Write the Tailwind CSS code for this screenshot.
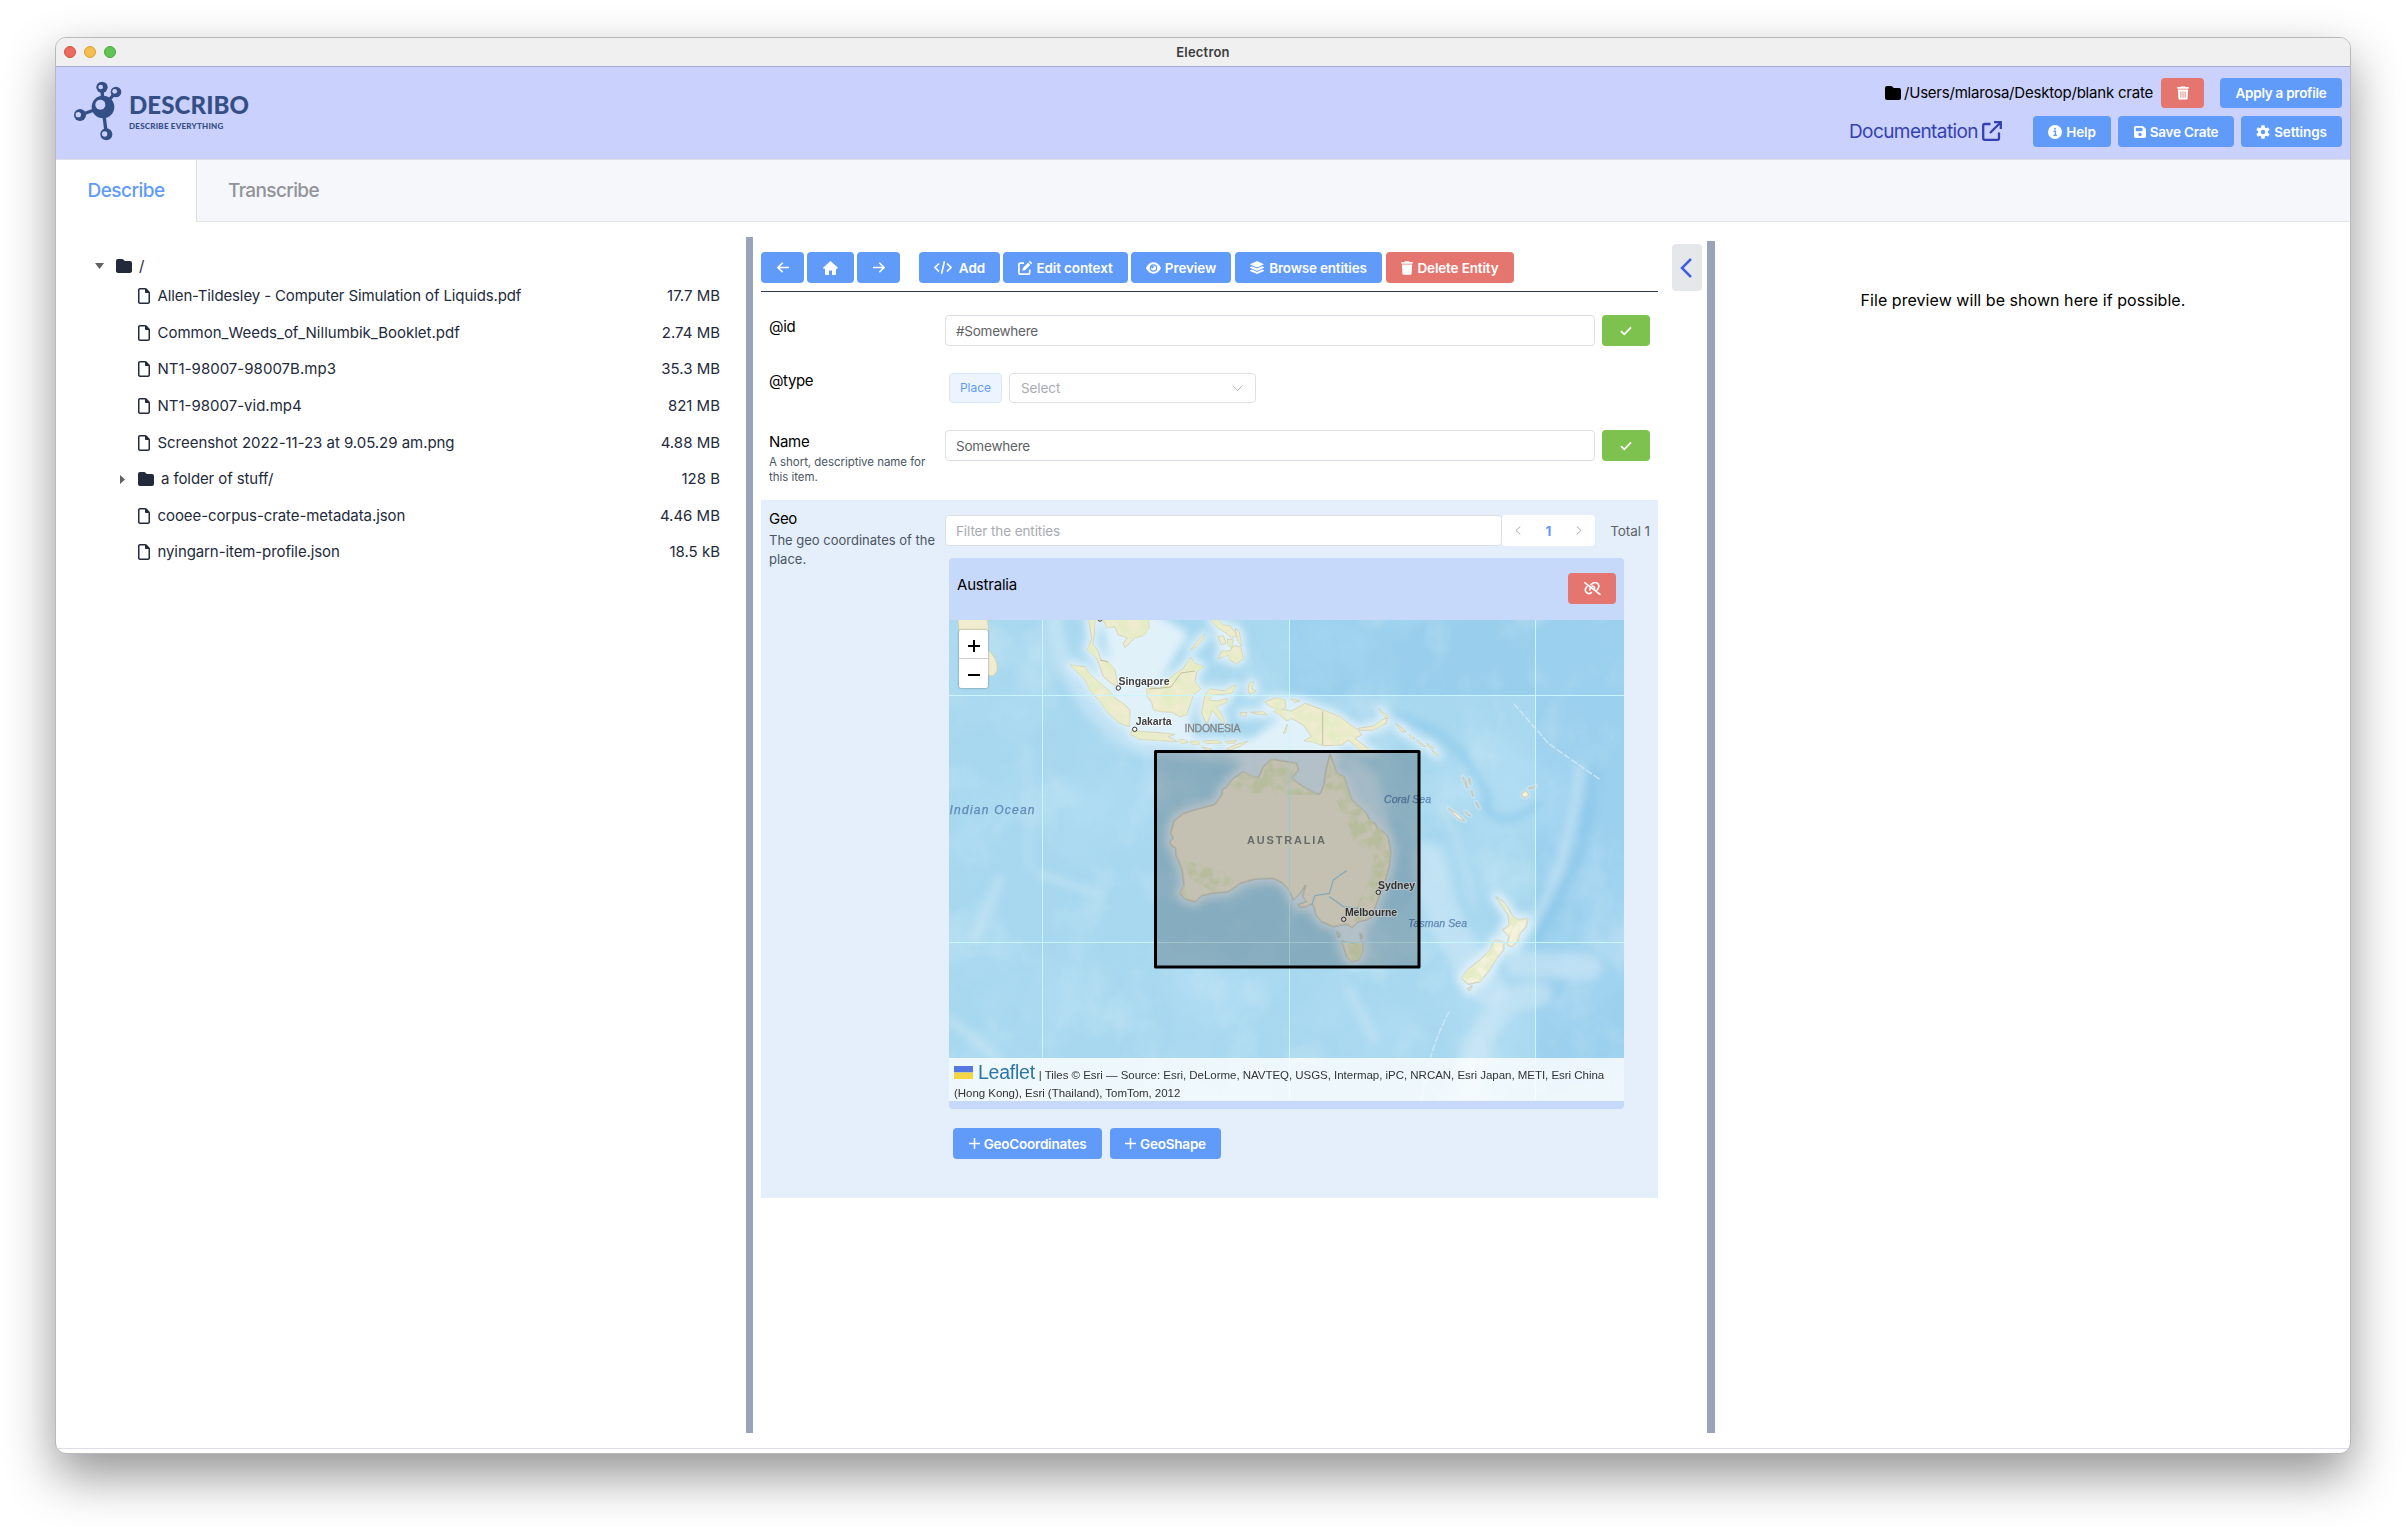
<!DOCTYPE html>
<html lang="en">
<head>
<meta charset="utf-8">
<title>Electron</title>
<script src="https://cdn.jsdelivr.net/npm/@tailwindcss/browser@4"></script>
</head>
<body class="w-[2406px] h-[1527px] overflow-hidden bg-white font-['Inter',sans-serif] text-[15px] leading-5 text-black">
<svg class="hidden">
  <symbol id="folder" viewBox="0 32 512 448"><path fill="currentColor" d="M64 480H448c35.3 0 64-28.700 64-64V160c0-35.300-28.700-64-64-64H288c-10.100 0-19.600-4.700-25.600-12.800L243.200 57.600C231.100 41.500 212.100 32 192 32H64C28.700 32 0 60.700 0 96V416c0 35.300 28.700 64 64 64z"/></symbol>
  <symbol id="file" viewBox="0 0 384 512"><path fill="currentColor" d="M320 464c8.800 0 16-7.200 16-16V160H256c-17.700 0-32-14.300-32-32V48H64c-8.800 0-16 7.200-16 16V448c0 8.800 7.200 16 16 16H320zM0 64C0 28.700 28.700 0 64 0H229.500c17 0 33.300 6.700 45.300 18.700l90.500 90.500c12 12 18.700 28.300 18.700 45.300V448c0 35.300-28.700 64-64 64H64c-35.300 0-64-28.700-64-64V64z"/></symbol>
  <symbol id="trash" viewBox="0 0 448 512"><path fill="currentColor" d="M135.200 17.700L128 32H32C14.300 32 0 46.300 0 64S14.300 96 32 96H416c17.700 0 32-14.300 32-32s-14.300-32-32-32H320l-7.200-14.300C307.400 6.800 296.300 0 284.200 0H163.800c-12.100 0-23.200 6.800-28.600 17.700zM416 128H32L53.200 467c1.600 25.300 22.600 45 47.900 45H346.900c25.300 0 46.300-19.700 47.900-45L416 128z"/></symbol>
  <symbol id="save" viewBox="0 32 448 448"><path fill="currentColor" fill-rule="evenodd" d="M64 32C28.700 32 0 60.700 0 96V416c0 35.300 28.700 64 64 64H384c35.300 0 64-28.700 64-64V173.300c0-17-6.700-33.300-18.700-45.300L352 50.700C340 38.700 323.700 32 306.700 32H64zM64 128c0-17.700 14.300-32 32-32H288c17.700 0 32 14.300 32 32v64c0 17.700-14.300 32-32 32H96c-17.700 0-32-14.300-32-32V128zM224 288a64 64 0 1 1 0 128 64 64 0 1 1 0-128z"/></symbol>
  <symbol id="check" viewBox="0 0 12 10"><path d="M1 5.200 4.300 8.300 11 1.300" fill="none" stroke="currentColor" stroke-width="1.700"/></symbol>
</svg>

<div class="ml-[55px] mt-[37px] w-[2296px] h-[1417px] rounded-[11px] border border-[#b9b9bb] overflow-hidden bg-white flex flex-col shadow-[0_22px_50px_rgba(0,0,0,0.42)]">
  <!-- title bar -->
  <div class="h-[29px] shrink-0 bg-[#f0f0f0] border-b border-[#a5abcf] flex items-center">
    <div class="flex gap-2 pl-[8px] w-[200px]">
      <span class="size-3 rounded-full bg-[#ec6a5e] border border-[#d0503f]"></span>
      <span class="size-3 rounded-full bg-[#f4bf4f] border border-[#d8a03c]"></span>
      <span class="size-3 rounded-full bg-[#61c554] border border-[#4ca73d]"></span>
    </div>
    <div class="flex-1 text-center text-[13px] font-semibold text-[#3c3c3c] pr-[200px] pb-[1px] tracking-[0.2px]">Electron</div>
  </div>
  <!-- header -->
  <div class="h-[93px] shrink-0 bg-[#cad1fc] border-b border-[#dcdfe6] flex justify-between">
    <div class="flex pl-[17px] pt-[14px]">
      <svg class="w-[50px] h-[60px]" viewBox="100 183 150 180">
        <g stroke="#344f86" stroke-width="10"><path d="M190 261 187 202"/><path d="M190 261 229 216"/><path d="M190 261 121 285"/><path d="M190 261 200 343"/></g>
        <g fill="#344f86"><circle cx="190" cy="261" r="34"/><circle cx="187" cy="202" r="17"/><circle cx="229" cy="216" r="16"/><circle cx="121" cy="285" r="18"/><circle cx="200" cy="343" r="18"/></g>
        <g fill="#cad1fc"><circle cx="182" cy="254" r="15"/><circle cx="183" cy="201" r="7"/><circle cx="225" cy="214" r="7"/><circle cx="116" cy="284" r="8"/><circle cx="195" cy="342" r="8"/></g>
      </svg>
      <div class="pl-[6px] pt-[12px] text-[#344f86] font-['Lato',sans-serif]">
        <div class="text-[24px] leading-[24px] font-black tracking-[0.1px]">DESCRIBO</div>
        <div class="text-[8px] leading-[10px] mt-[4px] font-black tracking-[0.23px] whitespace-nowrap">DESCRIBE EVERYTHING</div>
      </div>
    </div>
    <div class="pr-[8px] pt-[11px] text-[13.5px] font-semibold text-white">
      <div class="flex justify-end items-center h-[30px]">
        <svg class="w-[16px] h-[14px] text-black mr-[3px]"><use href="#folder"/></svg>
        <span class="text-black font-normal text-[15px] tracking-[-0.215px]">/Users/mlarosa/Desktop/blank crate</span>
        <div class="ml-[8px] w-[43px] h-[30px] rounded bg-[#e5766f] flex items-center justify-center">
          <svg class="w-[12px] h-[14px]" viewBox="0 0 448 512"><use href="#trash"/><path d="M145 200V430M224 200V430M303 200V430" stroke="#e5766f" stroke-width="32"/></svg>
        </div>
        <div class="ml-[16px] w-[122px] h-[30px] rounded bg-[#609bfa] flex items-center justify-center tracking-[-0.27px]">Apply a profile</div>
      </div>
      <div class="flex justify-end items-center h-[31px] mt-[8px]">
        <span class="font-normal text-[19px] tracking-[-0.58px] text-[#3441b3]">Documentation</span>
        <svg class="w-[20px] h-[20px] ml-[4px] mr-[31px] mb-[2px]" viewBox="0 0 20 20" fill="none" stroke="#3441b3" stroke-width="2.300"><path d="M8.500 3H2.800Q1.200 3 1.200 4.600V17.200Q1.200 18.800 2.800 18.800H15.400Q17 18.800 17 17.200V11.500"/><path d="M12 1.200H18.800V8M18.500 1.500 8 12"/></svg>
        <div class="w-[78px] h-[31px] rounded bg-[#609bfa] flex items-center justify-center gap-[4px]">
          <svg class="size-[14px]" viewBox="0 0 14 14"><circle cx="7" cy="7" r="7" fill="#fff"/><path d="M5.500 6.300H7.400V10.300M5.300 10.400H9" stroke="#609bfa" stroke-width="1.400" fill="none"/><circle cx="7" cy="3.800" r="1" fill="#609bfa"/></svg>
          <span class="tracking-[-0.15px]">Help</span></div>
        <div class="ml-[7px] w-[116px] h-[31px] rounded bg-[#609bfa] flex items-center justify-center gap-[4px]">
          <svg class="size-[12px]"><use href="#save"/></svg><span class="tracking-[-0.22px]">Save Crate</span></div>
        <div class="ml-[7px] w-[101px] h-[31px] rounded bg-[#609bfa] flex items-center justify-center gap-[4px]">
          <svg class="size-[14px]" viewBox="-7 -7 14 14"><g stroke="#fff" stroke-width="3.400"><path d="M0-6.800V6.800"/><path d="M-5.900-3.400 5.900 3.400"/><path d="M-5.900 3.400 5.900-3.400"/></g><circle r="4.900" fill="#fff"/><circle r="2.200" fill="#609bfa"/></svg>
          <span class="tracking-[-0.1px]">Settings</span></div>
      </div>
    </div>
  </div>
  <!-- tabs -->
  <div class="h-[62px] shrink-0 flex bg-[#f5f7fb] text-[19px] font-medium">
    <div class="w-[141px] bg-white border-r border-[#dcdfe8] text-[#609bfa] flex items-center justify-center tracking-[-0.54px]">Describe</div>
    <div class="flex-1 border-b border-[#e2e5ec] text-[#919398] flex items-center pl-[31px] tracking-[-0.63px]">Transcribe</div>
  </div>
  <!-- body -->
  <div class="h-[1226px] shrink-0 flex border-b border-[#dcdfe8] box-content">
    <!-- file tree -->
    <div class="w-[690px] pt-[31px] pr-[26px] text-[#232a3b] whitespace-nowrap">
      <div class="flex items-center h-[25px] pl-[39px]">
        <svg class="w-[9px] h-[6px]" viewBox="0 0 9 6"><path d="M0 0H9L4.500 6Z" fill="#606266"/></svg>
        <svg class="w-[16px] h-[14px] ml-[12px]"><use href="#folder"/></svg><span class="ml-[7px]">/</span>
      </div>
      <div class="flex items-center h-[36.6px] pl-[82px]"><svg class="w-[12px] h-[16px] mr-[7.500px]"><use href="#file"/></svg><span class="tracking-[-0.12px]">Allen-Tildesley - Computer Simulation of Liquids.pdf</span><span class="ml-auto">17.7 MB</span></div>
      <div class="flex items-center h-[36.6px] pl-[82px]"><svg class="w-[12px] h-[16px] mr-[7.500px]"><use href="#file"/></svg><span>Common_Weeds_of_Nillumbik_Booklet.pdf</span><span class="ml-auto">2.74 MB</span></div>
      <div class="flex items-center h-[36.6px] pl-[82px]"><svg class="w-[12px] h-[16px] mr-[7.500px]"><use href="#file"/></svg><span class="tracking-[0.02px]">NT1-98007-98007B.mp3</span><span class="ml-auto">35.3 MB</span></div>
      <div class="flex items-center h-[36.6px] pl-[82px]"><svg class="w-[12px] h-[16px] mr-[7.500px]"><use href="#file"/></svg><span class="tracking-[0px]">NT1-98007-vid.mp4</span><span class="ml-auto">821 MB</span></div>
      <div class="flex items-center h-[36.6px] pl-[82px]"><svg class="w-[12px] h-[16px] mr-[7.500px]"><use href="#file"/></svg><span class="tracking-[-0.04px]">Screenshot 2022-11-23 at 9.05.29 am.png</span><span class="ml-auto">4.88 MB</span></div>
      <div class="flex items-center h-[36.6px] pl-[64px]"><svg class="w-[5px] h-[9px] mr-[13px]" viewBox="0 0 5 9"><path d="M0 0 5 4.500 0 9Z" fill="#606266"/></svg><svg class="w-[16px] h-[14px] mr-[7px]"><use href="#folder"/></svg><span class="tracking-[-0.1px]">a folder of stuff/</span><span class="ml-auto">128 B</span></div>
      <div class="flex items-center h-[36.6px] pl-[82px]"><svg class="w-[12px] h-[16px] mr-[7.500px]"><use href="#file"/></svg><span class="tracking-[-0.08px]">cooee-corpus-crate-metadata.json</span><span class="ml-auto">4.46 MB</span></div>
      <div class="flex items-center h-[36.6px] pl-[82px]"><svg class="w-[12px] h-[16px] mr-[7.500px]"><use href="#file"/></svg><span class="tracking-[-0.1px]">nyingarn-item-profile.json</span><span class="ml-auto">18.5 kB</span></div>
    </div>
    <div class="w-[7px] mt-[15px] mb-[15px] bg-[#98a4b8]"></div>

    <!-- entity editor -->
    <div class="w-[897px] ml-[8px] pt-[30px]">
      <div class="flex h-[40px] border-b border-[#2f3a4c] text-white text-[13.5px] font-semibold whitespace-nowrap">
        <div class="w-[43px] h-[31px] rounded bg-[#609bfa] flex items-center justify-center"><svg class="w-[12px] h-[11px]" viewBox="0 0 12 11" fill="none" stroke="currentColor" stroke-width="1.600"><path d="M12 5.500H1.200M5.700.800 1 5.500 5.700 10.200"/></svg></div>
        <div class="ml-[3px] w-[47px] h-[31px] rounded bg-[#609bfa] flex items-center justify-center"><svg class="w-[15px] h-[14px]" viewBox="0 0 15 14"><path fill="currentColor" d="M7.500 0 15 6.700 14.300 7.800H13V13.300Q13 14 12.300 14H9V9.500H6V14H2.700Q2 14 2 13.300V7.800H.700L0 6.700Z"/></svg></div>
        <div class="ml-[3px] w-[43px] h-[31px] rounded bg-[#609bfa] flex items-center justify-center"><svg class="w-[12px] h-[11px]" viewBox="0 0 12 11" fill="none" stroke="currentColor" stroke-width="1.600"><path d="M0 5.500H10.800M6.300.800 11 5.500 6.300 10.200"/></svg></div>
        <div class="ml-[19px] w-[81px] h-[31px] rounded bg-[#609bfa] flex items-center justify-center gap-[7px]"><svg class="w-[18px] h-[13px]" viewBox="0 0 18 13" fill="none" stroke="currentColor" stroke-width="1.600"><path d="M5 2.500 1 6.500 5 10.500M13 2.500 17 6.500 13 10.500M10.500.300 7.500 12.700"/></svg>Add</div>
        <div class="ml-[3px] w-[125px] h-[31px] rounded bg-[#609bfa] flex items-center justify-center gap-[4px]"><svg class="size-[14px]" viewBox="0 0 14 14"><path d="M6 2.200H2.600Q.900 2.200.900 3.900V11.400Q.900 13.100 2.600 13.100H10Q11.700 13.100 11.700 11.400V8.500" fill="none" stroke="#fff" stroke-width="1.700"/><path fill="#fff" d="M10 1.700 12.300 4 7 9.200 4.300 9.800 4.900 7ZM10.700 1 11.500.200Q12 -.200 12.500.200L13.800 1.500Q14.200 2 13.800 2.500L13 3.300Z"/></svg><span class="tracking-[-0.12px]">Edit context</span></div>
        <div class="ml-[3px] w-[100px] h-[31px] rounded bg-[#609bfa] flex items-center justify-center gap-[4px]"><svg class="w-[15px] h-[12px]" viewBox="0 0 15 12"><path fill="#fff" d="M0 6Q2.700.300 7.500.300T15 6Q12.300 11.700 7.500 11.700T0 6Z"/><circle cx="7.500" cy="6" r="3.800" fill="#609bfa"/><circle cx="7.500" cy="6" r="2.500" fill="#fff"/><circle cx="6.500" cy="4.900" r="1.300" fill="#609bfa"/></svg><span class="tracking-[-0.1px]">Preview</span></div>
        <div class="ml-[4px] w-[147px] h-[31px] rounded bg-[#609bfa] flex items-center justify-center gap-[5px]"><svg class="w-[14px] h-[13px]" viewBox="0 0 14 13" fill="#fff"><path d="M7 0 14 3.200 7 6.400 0 3.200Z"/><path d="M0 6 2 5.200 7 7.600 12 5.200 14 6V6.800L7 10 0 6.800Z"/><path d="M0 9.200 2 8.500 7 10.900 12 8.500 14 9.200V10L7 13 0 10Z"/></svg><span class="tracking-[-0.2px]">Browse entities</span></div>
        <div class="ml-[4px] w-[128px] h-[31px] rounded bg-[#e5766f] flex items-center justify-center gap-[4px]"><svg class="w-[12px] h-[14px]"><use href="#trash"/></svg><span class="tracking-[-0.15px]">Delete Entity</span></div>
      </div>

      <div class="flex h-[31px] mt-[23px] pl-[8px]">
        <div class="w-[176px] pt-[2px] tracking-[-0.25px]">@id</div>
        <div class="w-[650px] border border-[#dcdfe6] rounded pl-[10px] flex items-center text-[13.5px] text-[#606266] tracking-[-0.25px]">#Somewhere</div>
        <div class="ml-[7px] w-[48px] rounded bg-[#7dc24e] text-white flex items-center justify-center"><svg class="w-[12px] h-[10px]"><use href="#check"/></svg></div>
      </div>
      <div class="flex h-[30px] mt-[27px] pl-[8px]">
        <div class="w-[176px] -mt-[2px] tracking-[-0.4px]">@type</div>
        <div class="ml-[4px] w-[53px] border border-[#dae6fb] rounded bg-[#eef4fe] flex items-center justify-center text-[12px] text-[#609bfa]">Place</div>
        <div class="ml-[7px] w-[247px] border border-[#dcdfe6] rounded pl-[11px] pr-[12px] flex items-center justify-between text-[13.5px] text-[#a8abb2] tracking-[-0.1px]">Select<svg class="w-[11px] h-[7px]" viewBox="0 0 11 7"><path d="M.700.700 5.500 5.700 10.300.700" fill="none" stroke="#b0b3b9"/></svg></div>
      </div>
      <div class="flex h-[31px] mt-[27px] pl-[8px]">
        <div class="w-[176px] pt-[2px] tracking-[-0.3px]">Name
          <div class="mt-[3px] w-[162px] text-[11.5px] leading-[15px] text-[#4b5563] tracking-[-0.05px]">A short, descriptive name for this item.</div></div>
        <div class="w-[650px] border border-[#dcdfe6] rounded pl-[10px] flex items-center text-[13.5px] text-[#606266] tracking-[-0.2px]">Somewhere</div>
        <div class="ml-[7px] w-[48px] rounded bg-[#7dc24e] text-white flex items-center justify-center"><svg class="w-[12px] h-[10px]"><use href="#check"/></svg></div>
      </div>

      <div class="flex h-[698px] mt-[39px] pl-[8px] pt-[15px] bg-[#e4effb]">
        <div class="w-[176px] -mt-[6px] tracking-[-0.3px]">Geo
          <div class="mt-[2px] w-[172px] text-[13px] leading-[19px] text-[#4b5563] tracking-normal">The geo coordinates of the place.</div></div>
        <div class="w-[705px]">
          <div class="flex h-[31px] text-[13.5px]">
            <div class="w-[557px] bg-white border border-[#dcdfe6] rounded pl-[10px] flex items-center text-[#a8abb2] tracking-[-0.1px]">Filter the entities</div>
            <div class="w-[93px] bg-white rounded-sm flex items-center justify-around">
              <svg class="w-[6px] h-[9px]" viewBox="0 0 6 9"><path d="M5.300.500 1 4.500 5.300 8.500" fill="none" stroke="#a8abb2"/></svg>
              <span class="font-bold text-[#609bfa]">1</span>
              <svg class="w-[6px] h-[9px]" viewBox="0 0 6 9"><path d="M.700.500 5 4.500.700 8.500" fill="none" stroke="#a8abb2"/></svg>
            </div>
            <span class="ml-auto self-center text-[#606266] tracking-[-0.1px]">Total 1</span>
          </div>

          <div class="ml-[4px] mt-[12px] w-[675px] h-[551px] rounded bg-[#c6d9fa] overflow-hidden">
            <div class="h-[62px] flex justify-between pl-[8px] pr-[8px]">
              <span class="pt-[17px] tracking-[-0.2px]">Australia</span>
              <div class="mt-[15px] w-[48px] h-[31px] rounded bg-[#e5766f] flex items-center justify-center"><svg class="w-[17px] h-[13px]" viewBox="0 0 17 13" fill="none" stroke="#fff" stroke-width="1.600" stroke-linecap="round"><path d="M1 .800 16 12.300"/><path d="M3 4.500Q.200 7.500 2 10 4.500 12.800 7.500 10.500"/><path d="M7 2.700Q10.500-.500 13 1 16.500 3.500 13.500 7.500L12.500 8.500"/><path d="M6 8Q5.700 6.300 7 5.200M8.500 4.300Q11 4.500 10.500 7.300"/></svg></div>
            </div>
            <!-- map -->
            <div class="relative w-[675px] h-[481px] overflow-hidden">
              <svg class="block w-[675px] h-[481px]" viewBox="0 1 675 481">
                <defs>
                  <filter id="soft2" x="-20%" y="-20%" width="140%" height="140%"><feGaussianBlur stdDeviation="4"/></filter>
                  <filter id="relief" x="0" y="0" width="100%" height="100%"><feTurbulence type="fractalNoise" baseFrequency=".018 .014" numOctaves="5" seed="8"/><feColorMatrix values="0 0 0 0 1  0 0 0 0 1  0 0 0 0 1  2.200 0 0 0 -1.100"/></filter>
                  <filter id="depth" x="0" y="0" width="100%" height="100%"><feTurbulence type="fractalNoise" baseFrequency=".010 .009" numOctaves="5" seed="23"/><feColorMatrix values="0 0 0 0 .49  0 0 0 0 .76  0 0 0 0 .92  0 2.400 0 0 -1.050"/></filter>
                  <filter id="woods" x="0" y="0" width="100%" height="100%"><feTurbulence type="fractalNoise" baseFrequency=".03" numOctaves="4" seed="4"/><feColorMatrix values="0 0 0 0 .78  0 0 0 0 .84  0 0 0 0 .56  3.600 0 0 0 -1.300"/><feComposite in2="SourceGraphic" operator="in"/></filter>
                  <g id="isles">
                    <path d="M92 150 110 152 135 155 150 178 175 200 205 225 225 250 250 265 270 285 268 335 240 325 205 295 180 260 150 225 135 195 110 170Z"/>
                    <path d="M145 5H165L163 60 158 85 175 110 182 135 205 140 225 165 232 205 235 215 215 205 190 185 178 150 170 130 150 110 142 105 155 70Z"/>
                    <path d="M185 5H325L327 40 310 62 285 68 255 98 250 85 262 68 235 60 225 35 200 38Z"/>
                    <path d="M320 218 335 215 360 222 380 200 400 180 430 160 440 145 452 128 465 145 490 155 470 170 465 200 482 222 460 240 450 270 440 300 420 305 395 292 365 290 340 285 335 262 322 245Z"/>
                    <path d="M495 240 510 222 555 228 580 212 588 210 575 235 520 240 505 255 530 258 562 250 560 262 530 275 545 300 555 325 535 308 515 285 512 300 500 328 485 295 490 265Z"/>
                    <path d="M275 345 305 350 345 352 380 355 405 358 385 365 412 380 350 376 300 373 272 358Z"/>
                    <path d="M415 375 430 373 445 382 425 386ZM450 380 475 378 480 388 455 388ZM490 378 530 376 545 384 500 386ZM555 380 590 376 585 384 560 385ZM560 402 590 388 622 380 600 394 570 405ZM485 396 515 402 505 406Z"/>
                    <path d="M535 130 545 108 570 108 580 92 602 95 610 130 590 147 570 135 565 120ZM512 15 530 10 550 30 570 32 590 60 575 70 560 55 535 40ZM533 65 550 62 558 85 545 90ZM562 72 580 75 575 98 565 92ZM453 104 470 82 495 58 490 72 468 95ZM585 40 598 50 604 92 592 75Z"/>
                    <path d="M628 205 640 200 635 222 648 228 630 238 624 225ZM600 294 620 292 618 303 605 302ZM632 292 670 290 682 300 655 298ZM742 328 738 352 730 355ZM752 252 780 258 765 262Z"/>
                    <path d="M675 260 710 248 735 255 738 278 720 282 755 288 795 265 850 285 900 305 925 325 955 345 965 360 945 370 970 390 1000 412 960 405 925 375 905 390 850 392 815 380 792 377 815 365 790 330 755 310 740 318 720 300 700 290 715 283 690 275Z"/>
                    <path d="M955 340 1000 333 1030 312 1042 310 1038 325 1000 345 960 346ZM1015 280 1045 305 1040 312ZM1068 325 1098 350 1085 350ZM1108 358 1125 372 1112 368ZM1130 375 1158 395 1145 392ZM1160 385 1182 400 1168 398ZM1175 405 1197 422 1182 415Z"/>
                  </g>
                  <path id="oz" d="M570 28 582 60 590 85 612 95 620 120 635 165 655 182 680 205 690 228 705 235 715 255 730 260 745 278 752 320 748 360 738 400 722 440 708 480 695 515 680 525 655 530 636 548 622 538 605 540 580 545 545 530 528 510 520 480 508 478 500 485 480 486 475 478 500 470 488 455 497 420 480 445 460 465 450 440 430 415 400 400 345 402 300 415 265 440 215 445 185 452 165 470 135 462 120 445 132 420 125 370 108 330 106 308 92 300 90 288 100 280 92 265 102 228 130 205 180 190 225 178 245 150 248 132 258 128 280 100 310 80 335 95 355 98 370 65 395 42 430 48 470 55 475 75 455 100 490 125 525 145 540 147 552 120 558 75Z"/>
                  <g id="south">
                    <path d="M605 588 640 595 668 590 668 620 655 645 635 650 620 635Z"/>
                    <path d="M1068 455 1090 470 1105 490 1118 515 1135 525 1163 520 1158 545 1140 565 1132 590 1115 605 1100 598 1108 575 1088 555 1108 540 1105 510Z"/>
                    <path d="M1065 585 1092 592 1090 615 1070 640 1045 680 1020 710 985 718 965 700 985 672 1020 645 1050 615ZM982 732 996 722 990 736Z"/>
                  </g>
                  <path id="specks" d="M925 190 950 205 975 228 955 222ZM1145 145 1158 138 1168 150 1155 158 1145 152ZM1165 130 1188 122 1182 130ZM968 95 976 118 982 130 976 105ZM988 98 992 120 986 110ZM995 135 1000 155 994 145ZM1008 170 1018 190 1010 180ZM975 198 992 213 980 208ZM590 560 600 568 596 578ZM660 565 668 575 664 582Z"/>
                </defs>
                <rect width="675" height="482" fill="#a7d8ef"/>
                <rect x="340.500" width="246" height="76" fill="#99cfed"/><rect x="586.500" width="90" height="482" fill="#9bd0ee"/>
                <rect width="675" height="482" filter="url(#depth)" opacity=".5"/>
                <rect width="675" height="482" filter="url(#relief)" opacity=".25"/>
                <g fill="none" stroke="#d3eaf7" stroke-linejoin="round" stroke-linecap="round">
                  <g filter="url(#soft2)">
                    <path d="M105 0Q108 40 135 80T200 130L290 138" stroke="#c0e2f4" stroke-width="16"/>
                    <path d="M480 240Q490 310 540 370" stroke-width="34" opacity=".55"/><path d="M520 470Q520 420 560 380L590 375M570 345L640 348" stroke-width="26" opacity=".55"/>
                    <path d="M630 150Q625 210 605 260T560 330" stroke-width="6" opacity=".7"/>
                    <path d="M645 150Q640 220 620 260T590 320" stroke="#84c2e8" stroke-width="5"/>
                    <path d="M400 370 425 420M0 400 50 440M25 320Q40 290 50 260" stroke-width="9" opacity=".5"/><path d="M90 255 150 275" stroke-width="6" opacity=".6"/>
                    <path d="M80 135V250M495 190Q520 250 525 290" stroke-width="4" opacity=".5"/>
                    <path d="M425 95Q490 100 520 145T535 185Q550 215 590 185" stroke="#84c4e9" stroke-width="4"/>
                  </g>
                  <path d="M500 393Q480 430 472 482M565 85 600 125 650 160" stroke-width="1.500" stroke-dasharray="6 3" opacity=".8"/>
                  <g filter="url(#soft2)" stroke="#e1f1fa" fill="#e1f1fa">
                    <g transform="translate(91 -4) scale(.33333)" stroke-width="24"><use href="#isles"/><path d="M200 20 240 230 300 360 450 370 440 300 340 210 380 140 430 60 330 0Z"/><path d="M590 420 750 300 900 430Z"/></g>
                    <g transform="translate(191 126) scale(.33333)" stroke-width="30"><use href="#oz"/><use href="#south"/><path d="M250 140 350 20 560 20 560 140ZM590 500 680 520 650 600 610 600Z"/><path d="M630 40 700 100 740 260 660 180Z" opacity=".6"/></g>
                  </g>
                  <g transform="translate(191 126) scale(.33333)" stroke-width="12" opacity=".6"><use href="#specks"/></g>
                </g>
                <g transform="translate(91 -4) scale(.33333)" fill="#efecd0" stroke="#cfcdb0" stroke-width="2.500" stroke-linejoin="round"><use href="#isles"/></g>
                <path d="M9 0H38L40 12H10ZM38 30Q50 40 48 52 44 60 38 55Z" fill="#efecd0" stroke="#cfcdb0" stroke-width=".8"/>
                <g transform="translate(191 126) scale(.33333)" fill="#f5f2df" stroke="#bdb9a2" stroke-width="2.500" stroke-linejoin="round"><use href="#oz"/><use href="#south"/><use href="#specks"/></g>
                <g transform="translate(91 -4) scale(.33333)" filter="url(#woods)"><use href="#isles"/></g>
                <g transform="translate(191 126) scale(.33333)">
                  <g filter="url(#woods)"><path d="M570 28 590 85 612 95 635 165 705 235 750 290 748 360 695 515 640 530 655 470 690 400 700 330 640 290 620 230 590 170 555 140ZM265 120 310 80 355 98 395 42 470 55 455 100 530 150 400 150 300 140ZM130 345 250 380 290 410 215 440 150 400ZM120 445 132 420 150 465ZM605 588 668 590 640 648Z"/><use href="#south"/></g>
                  <path d="M620 377 580 405 568 445 525 452 515 480M568 455 610 485 655 490" fill="none" stroke="#a9d3e6" stroke-width="4"/>
                </g>
                <g fill="none" stroke="#b9b69c" stroke-width=".8"><path d="M373.700 92V126M200 70 222 68 232 54 246 52 M151 41 159 43"/></g>
                <path d="M93.500 0V482M340.500 0V482M586.500 0V482M0 76.500H675M0 323.500H675" stroke="#c9f5fc" fill="none"/>
                <g fill="#fff" stroke="#333" stroke-width="1"><circle cx="169.300" cy="69" r="2.200"/><circle cx="185.700" cy="110.300" r="2.200"/><circle cx="429.300" cy="273.300" r="2.200"/><circle cx="394.700" cy="300.300" r="2.200"/><circle cx="151" cy="0" r="2.200"/></g>
                <g font-family="Liberation Sans, Arial, sans-serif" font-size="10.500">
                  <g font-weight="bold" fill="#3d3d3d" stroke="#ffffff" stroke-opacity=".6" stroke-width="2" paint-order="stroke">
                    <text x="169.500" y="65.500" textLength="51">Singapore</text><text x="186.700" y="106" textLength="36">Jakarta</text>
                    <text x="429" y="270" textLength="37">Sydney</text><text x="396" y="296.700" textLength="52">Melbourne</text></g>
                  <text x="235.500" y="112.500" textLength="56" fill="#858585" stroke="#858585" stroke-width=".3">INDONESIA</text>
                  <text x="298" y="225" textLength="78" font-weight="bold" fill="#858585" font-size="11">AUSTRALIA</text>
                  <g font-style="italic" fill="#6188b5" stroke="#6188b5" stroke-width=".25"><text x="435" y="184" textLength="47">Coral Sea</text><text x="459" y="308" textLength="59">Tasman Sea</text><text x=".5" y="195" textLength="85" font-size="12">Indian Ocean</text></g>
                </g>
                <rect x="206.500" y="132.500" width="263.500" height="215.500" fill="#000" fill-opacity=".2" stroke="#000" stroke-width="3" stroke-linejoin="round"/>
              </svg>
              <div class="absolute left-[10px] top-[10px] w-[29px] h-[58px] bg-white rounded-[2px] shadow-[0_0_2px_rgba(0,0,0,0.5)] flex flex-col">
                <div class="h-[29px] border-b border-[#ccc] flex items-center justify-center pt-[4px]"><svg class="size-[12px]" viewBox="0 0 12 12"><path d="M0 6H12M6 0V12" stroke="#000" stroke-width="2"/></svg></div>
                <div class="h-[29px] flex items-center justify-center pt-[3px]"><svg class="size-[12px]" viewBox="0 0 12 12"><path d="M0 6H12" stroke="#000" stroke-width="2"/></svg></div>
              </div>
              <div class="absolute left-0 bottom-0 w-[675px] h-[43px] bg-white/80 pl-[5px] font-['Liberation_Sans',sans-serif] text-[11.5px] leading-[19px] text-[#333] whitespace-nowrap">
                <div class="flex items-baseline h-[24px] pt-[5px]"><svg class="w-[19px] h-[13px] mr-[5px]" viewBox="0 0 19 13"><path fill="#5678e0" d="M0 0H19V6.500H0Z"/><path fill="#f5d642" d="M0 6.500H19V13H0Z"/></svg><span class="text-[19.5px] leading-[18px] text-[#2c75a6] tracking-[-0.25px]">Leaflet</span><span class="ml-[4px] tracking-[-0.03px]">| Tiles © Esri — Source: Esri, DeLorme, NAVTEQ, USGS, Intermap, iPC, NRCAN, Esri Japan, METI, Esri China</span></div>
                <div class="pt-[2px] tracking-[-0.04px]">(Hong Kong), Esri (Thailand), TomTom, 2012</div>
              </div>
            </div>
          </div>

          <div class="flex mt-[19px] ml-[8px] -translate-x-[4px] translate-x-0 -ml-0 gap-[8px] text-[13.5px] font-semibold text-white">
            <div class="w-[149px] h-[31px] rounded bg-[#609bfa] flex items-center justify-center gap-[4px]"><svg class="size-[11px]" viewBox="0 0 11 11"><path d="M0 5.500H11M5.500 0V11" stroke="#fff" stroke-width="1.500"/></svg><span class="tracking-[-0.22px]">GeoCoordinates</span></div>
            <div class="w-[111px] h-[31px] rounded bg-[#609bfa] flex items-center justify-center gap-[4px]"><svg class="size-[11px]" viewBox="0 0 11 11"><path d="M0 5.500H11M5.500 0V11" stroke="#fff" stroke-width="1.500"/></svg><span class="tracking-[-0.22px]">GeoShape</span></div>
          </div>
        </div>
      </div>
    </div>
    <div class="ml-[14px] mr-[1px] mt-[22px] w-[30px] h-[47px] rounded bg-[#e5e7eb] flex items-center justify-center"><svg class="w-[12px] h-[20px] mr-[2px]" viewBox="0 0 12 20"><path d="M11 1 2 10 11 19" fill="none" stroke="#3f5fe0" stroke-width="2.500"/></svg></div>
    <div class="ml-[4px] w-[8px] mt-[19px] mb-[15px] bg-[#98a4b8]"></div>
    <!-- preview pane -->
    <div class="flex-1 pt-[68px] pr-[19px] text-center text-[16px] tracking-[0.05px]">File preview will be shown here if possible.</div>
  </div>
</div>
</body>
</html>
